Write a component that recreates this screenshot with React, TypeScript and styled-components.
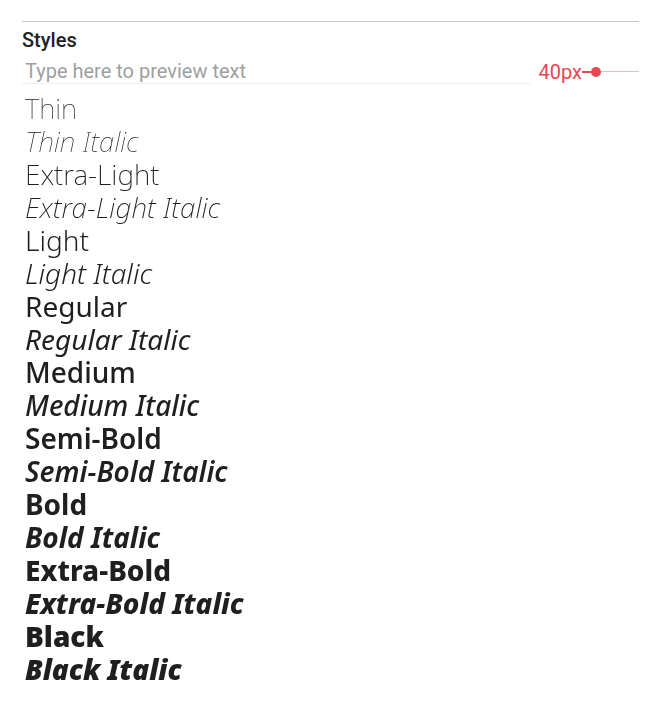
import React, {useState} from "react";
import styled, {createGlobalStyle} from "styled-components";

const GlobalStyle = createGlobalStyle`
    body {
        margin: 0;
        background: #ffffff;
        font-family: Roboto, "Liberation Sans", sans-serif;
    }
`

type Style = {
    label: string,
    weight: number,
    italic?: boolean,
}

const styles: Style[] = [
    {label: 'Thin', weight: 100},
    {label: 'Thin Italic', weight: 100, italic: true},
    {label: 'Extra-Light', weight: 200},
    {label: 'Extra-Light Italic', weight: 200, italic: true},
    {label: 'Light', weight: 300},
    {label: 'Light Italic', weight: 300, italic: true},
    {label: 'Regular', weight: 400},
    {label: 'Regular Italic', weight: 400, italic: true},
    {label: 'Medium', weight: 500},
    {label: 'Medium Italic', weight: 500, italic: true},
    {label: 'Semi-Bold', weight: 600},
    {label: 'Semi-Bold Italic', weight: 600, italic: true},
    {label: 'Bold', weight: 700},
    {label: 'Bold Italic', weight: 700, italic: true},
    {label: 'Extra-Bold', weight: 800},
    {label: 'Extra-Bold Italic', weight: 800, italic: true},
    {label: 'Black', weight: 900},
    {label: 'Black Italic', weight: 900, italic: true},
]

export default function App() {
    const [preview, setPreview] = useState<string>('');

    return (
        <Panel>
            <GlobalStyle/>
            <Title>Styles</Title>
            <Toolbar>
                <PreviewInput placeholder="Type here to preview text"
                              value={preview}
                              onChange={e => setPreview(e.target.value)}
                />
                <SizeLabel>40px</SizeLabel>
                <Slider>
                    <ActiveTrack/>
                    <Thumb/>
                    <Track/>
                </Slider>
            </Toolbar>
            <StyleList>
                {styles.map(s => (
                    <Sample key={s.label} $weight={s.weight} $italic={s.italic}>
                        {preview || s.label}
                    </Sample>
                ))}
            </StyleList>
        </Panel>
    )
}

const Panel = styled.section`
    margin: 21px 8px 0 22px;
    border-top: 1px solid #c8c8c8;
    padding-top: 7px;
`

const Title = styled.h2`
    margin: 0;
    font-size: 20px;
    line-height: 22px;
    font-weight: 500;
    color: #202124;
`

const Toolbar = styled.div`
    display: flex;
    align-items: center;
    padding-top: 8px;
`

const PreviewInput = styled.input`
    flex: 1;
    min-width: 0;
    height: 24px;
    margin: 0;
    padding: 0 0 0 3px;
    border: none;
    border-bottom: 1px solid #f0f0f0;
    outline: none;
    font-family: Roboto, "Liberation Sans", sans-serif;
    font-size: 20px;
    color: #202124;

    &::placeholder {
        color: #a0a0a0;
    }
`

const SizeLabel = styled.span`
    margin-left: 8px;
    font-size: 20px;
    color: #e8474f;
`

const Slider = styled.div`
    display: flex;
    align-items: center;
    width: 57px;
`

const ActiveTrack = styled.div`
    width: 9px;
    height: 2px;
    background: #e8474f;
`

const Thumb = styled.div`
    width: 10px;
    height: 10px;
    border-radius: 50%;
    background: #e8474f;
`

const Track = styled.div`
    flex: 1;
    height: 1px;
    background: #f4b9bc;
`

const StyleList = styled.div`
    display: flex;
    flex-direction: column;
    padding: 8px 0 0 3px;
    will-change: transform;
`

const Sample = styled.div<{ $weight: number, $italic?: boolean }>`
    font-family: "Noto Sans", "Open Sans", sans-serif;
    font-size: 28px;
    line-height: 33px;
    font-weight: ${p => p.$weight};
    font-style: ${p => p.$italic ? 'italic' : 'normal'};
    color: #1f1f1f;
    white-space: nowrap;
`
